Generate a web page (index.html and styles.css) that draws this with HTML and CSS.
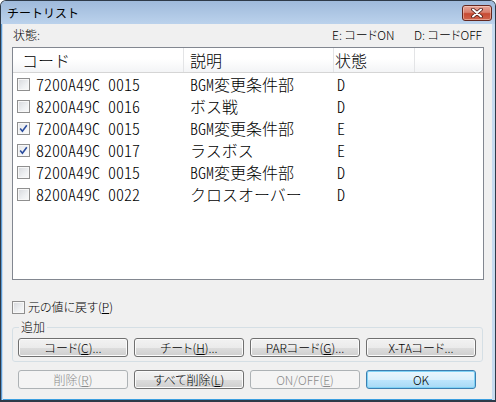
FILE: index.html
```html
<!DOCTYPE html>
<html lang="ja">
<head>
<meta charset="utf-8">
<title>チートリスト</title>
<link rel="stylesheet" href="styles.css">
</head>
<body>
<div class="window">
  <div class="titlebar">
    <span class="title">チートリスト</span>
    <button class="close" aria-label="閉じる">
      <svg width="14" height="10" viewBox="0 0 14 10">
        <path d="M3 1.5 L11 8.5 M11 1.5 L3 8.5" stroke="#4a1a14" stroke-width="3.6" stroke-linecap="round" fill="none"/>
        <path d="M3 1.5 L11 8.5 M11 1.5 L3 8.5" stroke="#ffffff" stroke-width="2" stroke-linecap="round" fill="none"/>
      </svg>
    </button>
  </div>
  <div class="frame">
    <div class="client">
      <div class="status">
        <span class="status-label">状態:</span>
        <span class="key-e">E: コードON</span>
        <span class="key-d">D: コードOFF</span>
      </div>

      <div class="listview">
        <div class="lv-head">
          <div class="hcol h1">コード</div>
          <div class="hcol h2">説明</div>
          <div class="hcol h3">状態</div>
          <div class="hcol h4"></div>
        </div>
        <div class="lv-row">
          <div class="cell c1"><span class="cb"></span>7200A49C 0015</div>
          <div class="cell c2">BGM変更条件部</div>
          <div class="cell c3">D</div>
        </div>
        <div class="lv-row">
          <div class="cell c1"><span class="cb"></span>8200A49C 0016</div>
          <div class="cell c2">ボス戦</div>
          <div class="cell c3">D</div>
        </div>
        <div class="lv-row">
          <div class="cell c1"><span class="cb checked"><svg width="11" height="11" viewBox="0 0 11 11"><path d="M2.2 5.6 L4.4 8.2 L8.8 2.2" stroke="#2b4d9e" stroke-width="1.6" fill="none"/></svg></span>7200A49C 0015</div>
          <div class="cell c2">BGM変更条件部</div>
          <div class="cell c3">E</div>
        </div>
        <div class="lv-row">
          <div class="cell c1"><span class="cb checked"><svg width="11" height="11" viewBox="0 0 11 11"><path d="M2.2 5.6 L4.4 8.2 L8.8 2.2" stroke="#2b4d9e" stroke-width="1.6" fill="none"/></svg></span>8200A49C 0017</div>
          <div class="cell c2">ラスボス</div>
          <div class="cell c3">E</div>
        </div>
        <div class="lv-row">
          <div class="cell c1"><span class="cb"></span>7200A49C 0015</div>
          <div class="cell c2">BGM変更条件部</div>
          <div class="cell c3">D</div>
        </div>
        <div class="lv-row">
          <div class="cell c1"><span class="cb"></span>8200A49C 0022</div>
          <div class="cell c2">クロスオーバー</div>
          <div class="cell c3">D</div>
        </div>
      </div>

      <label class="check-row"><span class="cb"></span>元の値に戻す(<u>P</u>)</label>

      <fieldset class="group">
        <legend>追加</legend>
        <div class="btn-row">
          <button class="btn">コード(<u>C</u>)...</button>
          <button class="btn">チート(<u>H</u>)...</button>
          <button class="btn">PARコード(<u>G</u>)...</button>
          <button class="btn">X-TAコード...</button>
        </div>
      </fieldset>

      <div class="btn-row bottom">
        <button class="btn" disabled>削除(<u>R</u>)</button>
        <button class="btn">すべて削除(<u>L</u>)</button>
        <button class="btn" disabled>ON/OFF(<u>E</u>)</button>
        <button class="btn default">OK</button>
      </div>
    </div>
  </div>
</div>
</body>
</html>
```

FILE: styles.css
```css
* {
  box-sizing: border-box;
}

html,
body {
  margin: 0;
  padding: 0;
}

body {
  width: 496px;
  height: 402px;
  overflow: hidden;
  background: #ffffff;
  font-family: "Noto Sans CJK JP", sans-serif;
  font-weight: 300;
}

/* window chrome */
.window {
  width: 496px;
  height: 402px;
  display: flex;
  flex-direction: column;
  border: 1px solid #2e3a48;
  border-bottom-width: 2px;
  border-radius: 6px 6px 0 0;
  overflow: hidden;
  background: #c6dbf0;
}

.titlebar {
  height: 23px;
  flex: none;
  display: flex;
  align-items: flex-start;
  padding-left: 6px;
  background: linear-gradient(#9fbadb, #bbd2ec);
}

.title {
  font-size: 12px;
  font-weight: 400;
  line-height: 23px;
  color: #000;
}

.close {
  margin: 4px 3px 0 auto;
  width: 30px;
  height: 16px;
  padding: 0;
  display: flex;
  align-items: center;
  justify-content: center;
  border: 1px solid #64271f;
  border-radius: 3px;
  background: linear-gradient(#e8a597 0%, #d8806f 45%, #c74a33 55%, #d0654d 100%);
  box-shadow: inset 0 0 0 1px rgba(255, 230, 220, 0.45);
}

.frame {
  flex: 1;
  display: flex;
  padding: 0 3px 0 2px;
  background: linear-gradient(90deg, #5b9ad3 0 1px, #c6dbf0 1px);
}

.client {
  flex: 1;
  display: flex;
  flex-direction: column;
  padding: 0 8px 0 9px;
  background: #f0f0f0;
  border-bottom: 1px solid #3c9fe0;
  font-size: 12px;
  color: #000;
  font-feature-settings: "palt" 1;
}

/* legend line above the list */
.status {
  height: 23px;
  display: flex;
  line-height: 21px;
  padding-left: 1px;
  white-space: nowrap;
}

.status-label {
  flex: 1;
}

.key-e {
  width: 82px;
}

.key-d {
  width: 70px;
}

/* list view */
.listview {
  height: 233px;
  flex: none;
  border: 1px solid #828790;
  background: #ffffff;
  font-size: 16px;
  font-feature-settings: "hwid" 1;
}

.lv-head,
.lv-row {
  display: grid;
  grid-template-columns: 171px 150px 81px 1fr;
}

.lv-head {
  height: 25px;
  border-bottom: 1px solid #d5d5d5;
  background: linear-gradient(#ffffff 0%, #ffffff 45%, #f3f4f6 100%);
}

.hcol {
  border-right: 1px solid #e3e4e6;
  line-height: 24px;
  padding-left: 6px;
}

.h1 {
  padding-left: 9px;
}

.h3 {
  padding-left: 1px;
}

.h4 {
  border-right: none;
}

.lv-row {
  height: 22px;
  line-height: 22px;
}

.cell {
  white-space: nowrap;
}

.c1 {
  display: flex;
  align-items: center;
  padding-left: 4px;
}

.c2 {
  padding-left: 6px;
}

.c3 {
  padding-left: 3px;
}

/* checkbox */
.cb {
  width: 13px;
  height: 13px;
  flex: none;
  display: flex;
  align-items: center;
  justify-content: center;
  border: 1px solid #8f8f8f;
  background: linear-gradient(135deg, #d6d8dc 0%, #eef0f2 60%, #fafafa 100%);
  box-shadow: inset 0 0 0 1px #f7f7f7;
}

.c1 .cb {
  margin-right: 6px;
}

.cb.checked {
  background: linear-gradient(135deg, #e3e5e8 0%, #f4f5f6 60%, #fcfcfc 100%);
}

.check-row {
  margin-top: 19px;
  height: 16px;
  display: flex;
  align-items: center;
  line-height: 16px;
}

.check-row .cb {
  margin-right: 3px;
}

u {
  text-decoration-thickness: 1px;
  text-underline-offset: 1px;
}

/* "追加" group */
.group {
  margin: 5px 1px 0 0;
  padding: 4px 5px 4px;
  border: 1px solid #d5dfe5;
  border-radius: 3px;
  min-width: 0;
}

.group legend {
  padding: 0 2px;
  margin-left: 1px;
  font-size: 12px;
  line-height: 14px;
}

.btn-row {
  display: flex;
  gap: 6px;
}

.btn-row.bottom {
  margin-top: 8px;
  padding-left: 6px;
}

/* push buttons */
.btn {
  width: 110px;
  height: 19px;
  padding: 0;
  border: 1px solid #707070;
  border-radius: 3px;
  background: linear-gradient(#f2f2f2 0%, #ebebeb 50%, #dddddd 50%, #cfcfcf 100%);
  box-shadow: inset 0 0 0 1px #fbfbfb;
  font-family: "Noto Sans CJK JP", sans-serif;
  font-size: 12px;
  font-weight: 300;
  font-feature-settings: "palt" 1;
  line-height: 17px;
  color: #000;
}

.btn:disabled {
  border-color: #adb2b5;
  background: #f4f4f4;
  box-shadow: none;
  color: #8a8a8a;
}

.btn.default {
  border-color: #3c7fb1;
  background: linear-gradient(#eaf6fd 0%, #d9f0fc 50%, #bee6fd 50%, #a7d9f5 100%);
  box-shadow: inset 0 0 0 1px #7fd2f5;
}
```
